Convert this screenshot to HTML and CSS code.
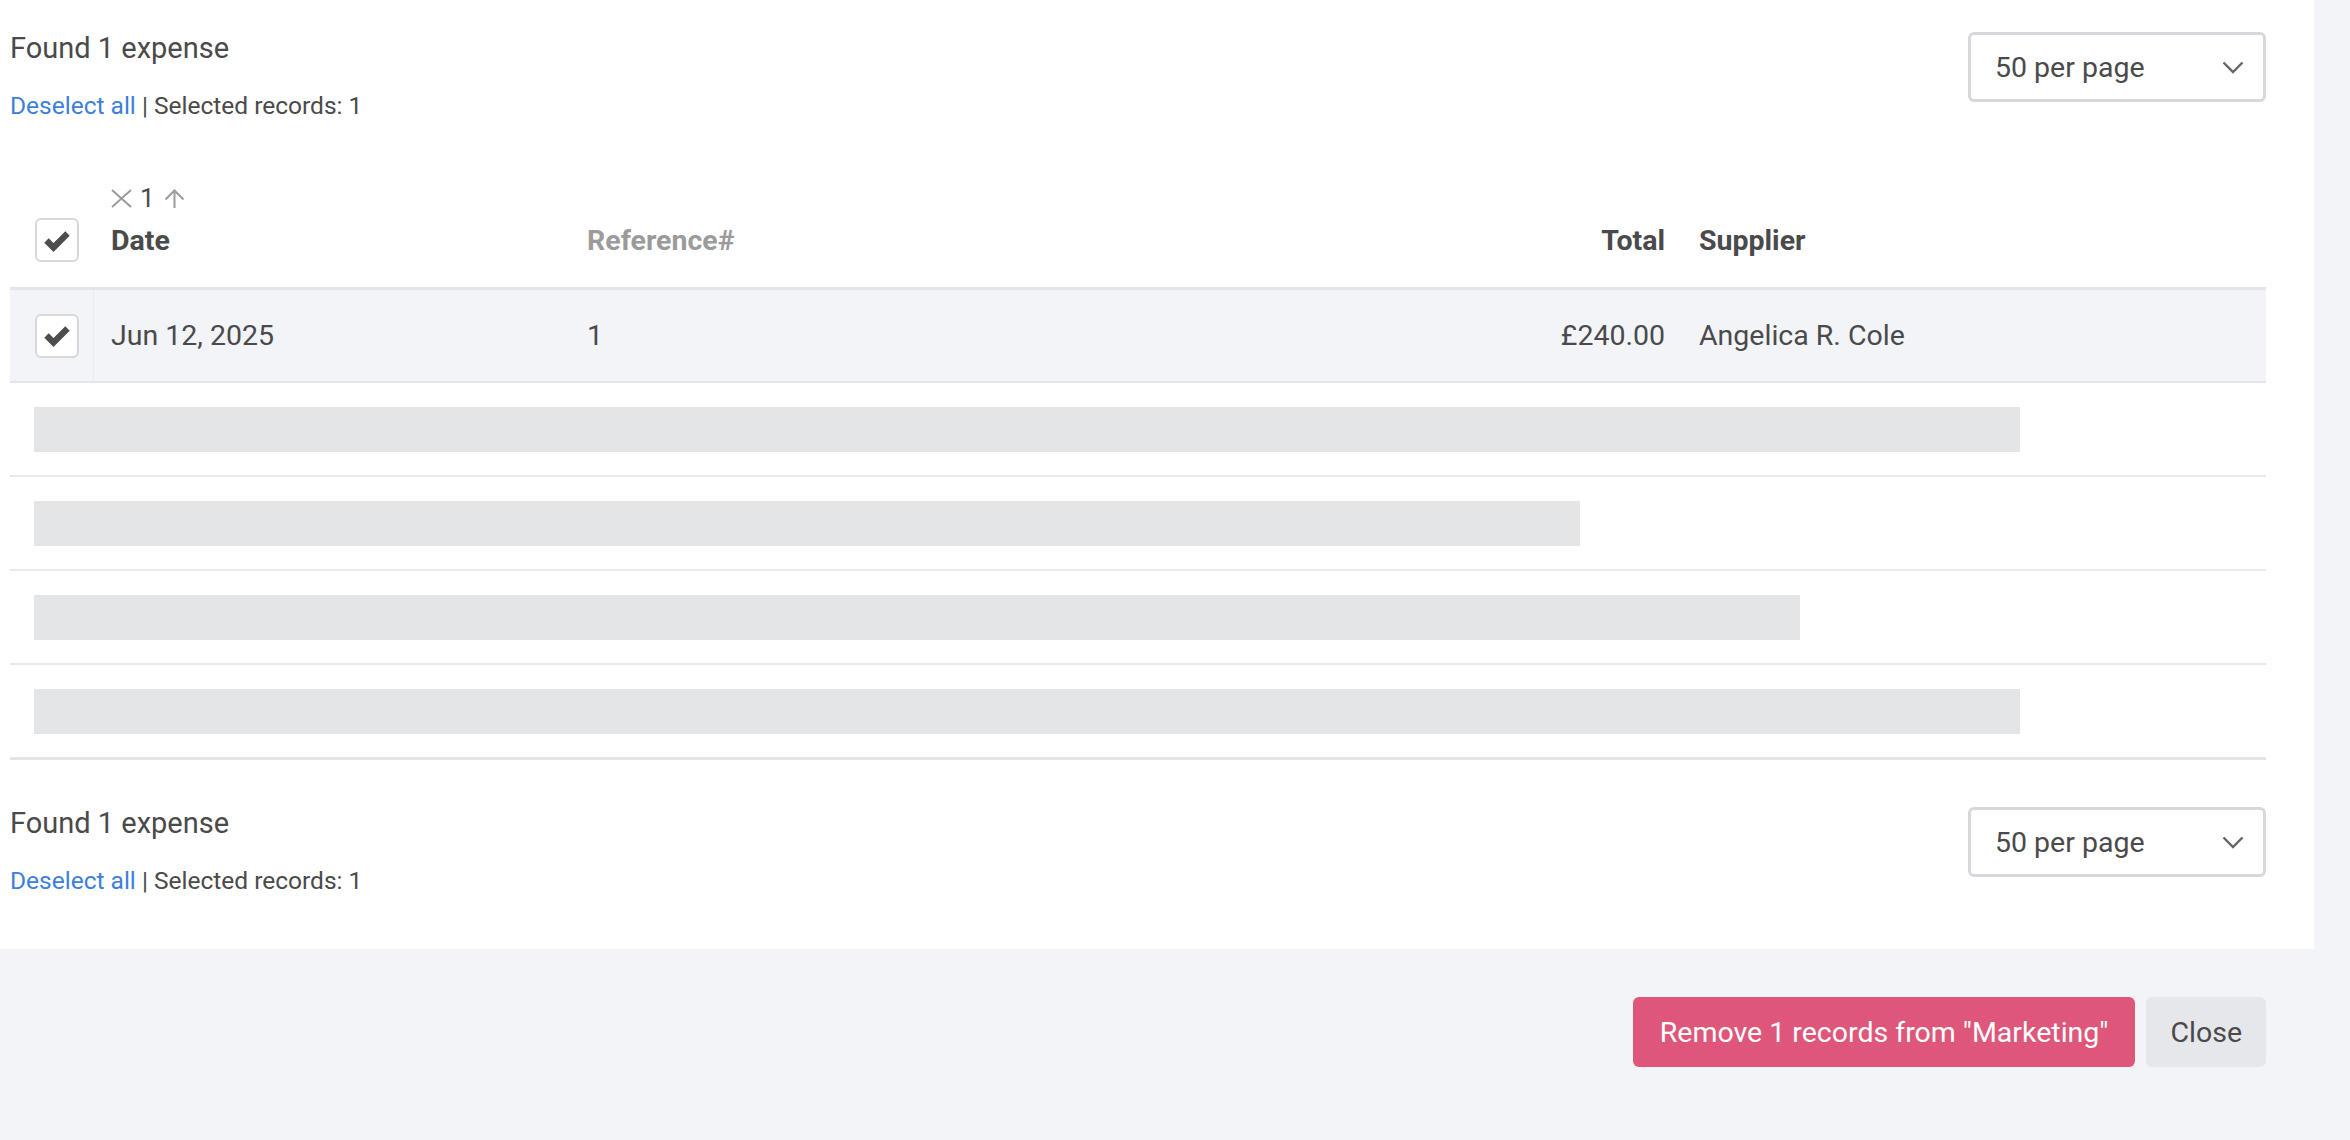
FILE: index.html
```html
<!DOCTYPE html>
<html lang="en">
<head>
<meta charset="utf-8">
<title>Expenses</title>
<link rel="stylesheet" href="styles.css">
</head>
<body>
<div class="page">
  <main class="panel">
    <div class="toolbar">
      <div class="summary">
        <div class="found">Found 1 expense</div>
        <div class="selection"><a class="link" href="#">Deselect all</a> | Selected records: 1</div>
      </div>
      <div class="select">
        <span>50 per page</span>
        <svg class="chevron" width="22" height="13" viewBox="0 0 22 13"><polyline points="1.5,1.5 11,11 20.5,1.5" fill="none" stroke="#666" stroke-width="2.4"/></svg>
      </div>
    </div>

    <div class="table">
      <div class="row head">
        <div class="cell cb"><span class="checkbox"><svg width="26" height="23" viewBox="0 0 26 23"><polyline points="2.5,11.5 9.5,18.5 23.5,4.5" fill="none" stroke="#4d4d4d" stroke-width="6.2"/></svg></span></div>
        <div class="cell">
          <div class="sort">
            <svg width="21" height="19" viewBox="0 0 21 19"><path d="M1 1 L20 18 M20 1 L1 18" stroke="#9b9b9b" stroke-width="2" fill="none"/></svg>
            <span class="sort-num">1</span>
            <svg class="arrow" width="21" height="19" viewBox="0 0 21 19"><path d="M10.5 1.5 V19 M1.5 10.5 L10.5 1.5 L19.5 10.5" stroke="#9b9b9b" stroke-width="2" fill="none"/></svg>
          </div>
          <div class="th">Date</div>
        </div>
        <div class="cell"><div class="th muted">Reference#</div></div>
        <div class="cell right"><div class="th">Total</div></div>
        <div class="cell"><div class="th">Supplier</div></div>
      </div>

      <div class="row data">
        <div class="cell cb"><span class="checkbox"><svg width="26" height="23" viewBox="0 0 26 23"><polyline points="2.5,11.5 9.5,18.5 23.5,4.5" fill="none" stroke="#4d4d4d" stroke-width="6.2"/></svg></span></div>
        <div class="cell">Jun 12, 2025</div>
        <div class="cell">1</div>
        <div class="cell right">£240.00</div>
        <div class="cell">Angelica R. Cole</div>
      </div>

      <div class="skel-row"><div class="bar bar-long"></div></div>
      <div class="skel-row"><div class="bar bar-short"></div></div>
      <div class="skel-row"><div class="bar bar-mid"></div></div>
      <div class="skel-row last"><div class="bar bar-long"></div></div>
    </div>

    <div class="toolbar bottom">
      <div class="summary">
        <div class="found">Found 1 expense</div>
        <div class="selection"><a class="link" href="#">Deselect all</a> | Selected records: 1</div>
      </div>
      <div class="select">
        <span>50 per page</span>
        <svg class="chevron" width="22" height="13" viewBox="0 0 22 13"><polyline points="1.5,1.5 11,11 20.5,1.5" fill="none" stroke="#666" stroke-width="2.4"/></svg>
      </div>
    </div>
  </main>

  <footer class="actions">
    <button class="btn danger" type="button">Remove 1 records from "Marketing"</button>
    <button class="btn plain" type="button">Close</button>
  </footer>
</div>
</body>
</html>
```

FILE: styles.css
```css
* { box-sizing: border-box; }

html, body {
  margin: 0;
  padding: 0;
}

body {
  background: #f3f4f8;
  font-family: Roboto, "Liberation Sans", sans-serif;
  color: #4a4a4a;
  width: 2350px;
  height: 1140px;
  overflow: hidden;
}

.page {
  display: flex;
  flex-direction: column;
}

.panel {
  background: #ffffff;
  margin-right: 36px;
  padding: 0 48px 54px 10px;
}

.toolbar {
  display: flex;
  justify-content: space-between;
  align-items: flex-start;
  padding-top: 31px;
}

.toolbar.bottom {
  padding-top: 46px;
}

.found {
  font-size: 29px;
  line-height: 34px;
  color: #4a4a4a;
}

.selection {
  margin-top: 27px;
  font-size: 24.5px;
  line-height: 28px;
  color: #4a4a4a;
}

.link {
  color: #3d7fdb;
  text-decoration: none;
}

.select {
  margin-top: 1px;
  width: 298px;
  height: 70px;
  border: 3px solid #d7d8dc;
  border-radius: 6px;
  display: flex;
  align-items: center;
  justify-content: space-between;
  padding: 0 19px 0 24px;
  font-size: 28.5px;
  color: #4a4a4a;
}

.chevron { display: block; }

.table {
  font-size: 28.5px;
  line-height: 33px;
}

.row {
  display: grid;
  grid-template-columns: 84px 476px 730px 382px 584px;
}

.cell {
  padding: 0 17px;
}

.cell.right {
  text-align: right;
}

.cell.cb {
  padding: 0 0 0 25px;
  display: flex;
  align-items: center;
}

.row.head {
  height: 170px;
  align-items: end;
  border-bottom: 3px solid #e4e5e8;
}

.row.head .cell {
  padding-bottom: 30px;
}

.row.head .cell.cb {
  padding-bottom: 25px;
}

.th {
  font-weight: 700;
  color: #4a4a4a;
}

.th.muted {
  color: #9b9b9b;
}

.sort {
  display: flex;
  align-items: center;
  height: 28px;
  margin-bottom: 12px;
}

.sort svg { display: block; }

.sort-num {
  font-size: 26px;
  line-height: 28px;
  color: #4a4a4a;
  margin-left: 8px;
}

.sort .arrow {
  margin-left: 9px;
}

.row.data {
  height: 93px;
  background: #f3f4f8;
  border-bottom: 2px solid #e4e5e8;
  align-items: center;
}

.row.data .cell.cb {
  align-self: stretch;
  border-right: 1px solid #eaebef;
}

.checkbox {
  width: 44px;
  height: 44px;
  border: 2px solid #d7d8dc;
  border-radius: 6px;
  background: #ffffff;
  display: flex;
  align-items: center;
  justify-content: center;
}

.checkbox svg { display: block; }

.skel-row {
  padding: 24px 0 23px 24px;
  border-bottom: 2px solid #e8e9ec;
}

.skel-row.last {
  border-bottom: 3px solid #e4e5e8;
}

.bar {
  height: 45px;
  background: #e4e5e7;
}

.bar-long { width: 1986px; }
.bar-short { width: 1546px; }
.bar-mid { width: 1766px; }

.actions {
  display: flex;
  justify-content: flex-end;
  gap: 11px;
  padding: 48px 84px 0 0;
}

.btn {
  height: 70px;
  border: none;
  border-radius: 6px;
  padding: 0 26px;
  font-family: Roboto, "Liberation Sans", sans-serif;
  font-size: 28.5px;
  cursor: pointer;
}

.btn.danger {
  background: #de577a;
  color: #ffffff;
  padding: 0 27px;
}

.btn.plain {
  background: #e6e7ea;
  color: #4a4a4a;
  padding: 0 24px;
}
```
